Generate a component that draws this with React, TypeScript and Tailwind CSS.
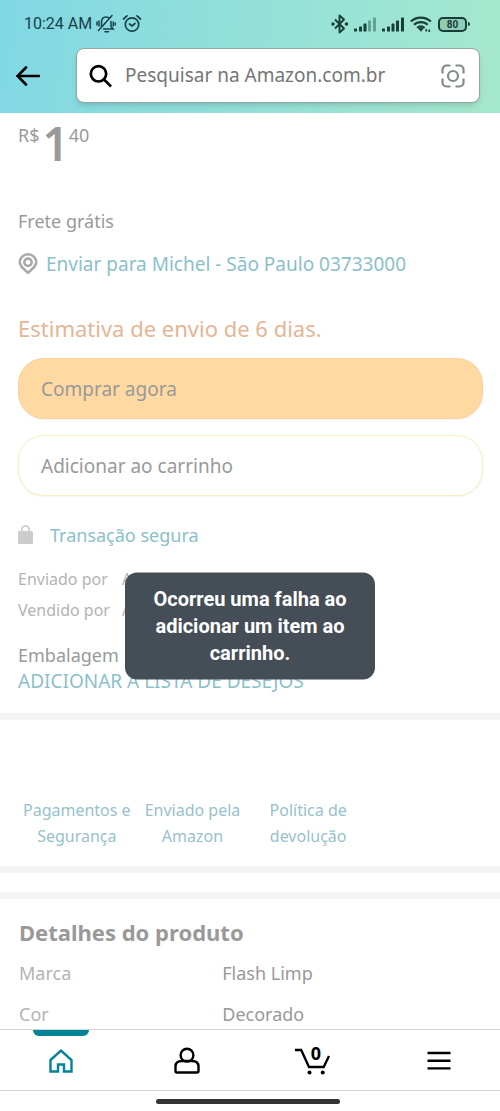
import type { ReactNode } from "react";

function StatusBar() {
  return (
    <div className="flex h-12 items-center justify-between pr-[30px] pl-6 font-[Roboto,sans-serif] text-[#17404a]">
      <div className="flex items-center gap-1">
        <span className="text-base leading-6">10:24 AM</span>
        <svg className="h-5 w-5" viewBox="0 0 20 20" fill="none" stroke="currentColor" strokeWidth="1.500" strokeLinecap="round">
          <path d="M5.500 12V8.500C5.500 5 7.200 3 10 3c1.500 0 2.700.5 3.600 1.400M15 7.500v5l2.200 2.500H7.500M2.500 16.500 16 1.500M9 17.700h3.500M1 8v3M3 7v5M17.300 8v4M19.300 9v2" />
        </svg>
        <svg className="ml-0.5 h-5 w-5" viewBox="0 0 20 20" fill="none" stroke="currentColor" strokeWidth="1.700" strokeLinecap="round">
          <circle cx="10" cy="10.500" r="6.700" />
          <path d="M1.500 5 5 1.800M18.500 5 15 1.800M7.500 10l2.500 2 3-2.500" />
        </svg>
      </div>
      <div className="flex items-center gap-1 text-[#173f38]">
        <svg className="h-5 w-5" viewBox="0 0 20 20" fill="none" stroke="currentColor" strokeWidth="1.900" strokeLinejoin="round">
          <path d="m5 5.500 9 9-4.500 4V1.500l4.500 4-9 9" />
          <circle cx="3" cy="10" r=".8" fill="currentColor" />
          <circle cx="16.500" cy="10" r=".8" fill="currentColor" />
        </svg>
        <SignalBars weak />
        <SignalBars />
        <svg className="h-5 w-6" viewBox="0 0 24 20" fill="none" stroke="currentColor" strokeWidth="2.300">
          <path d="M.8 7.500c5.500-5.300 14.500-5.300 20 0M4 10.800c3.800-3.700 9.900-3.700 13.700 0M7.200 14c2-2 5.200-2 7.400 0" />
          <path d="m8.200 14.500 2.700 3.300 2.700-3.300c-1.500-1.200-3.900-1.200-5.400 0Z" fill="currentColor" stroke="none" />
          <path d="M16.300 15v2.500M19.300 15.500V18" strokeWidth="1.600" />
        </svg>
        <div className="flex items-center gap-px">
          <span className="flex h-[15px] w-[29px] items-center justify-center rounded-[5px] border-2 border-current bg-[#8fcdb5] pt-px text-[10px] leading-[10px] font-bold">80</span>
          <span className="h-1 w-0.5 rounded-r bg-current" />
        </div>
      </div>
    </div>
  );
}

function SignalBars({ weak = false }: { weak?: boolean }) {
  return (
    <svg className="h-5 w-6" viewBox="0 0 24 20" fill="currentColor">
      <rect x="0" y="14.500" width="3" height="3" rx=".6" />
      <rect x="5" y="12.500" width="3" height="5" rx=".6" />
      <rect x="9.500" y="9.500" width="3" height="8" rx=".6" />
      <rect x="14" y="6.500" width="3" height="11" rx=".6" opacity={weak ? 0.4 : 1} />
      <rect x="19" y="3.500" width="3" height="14" rx=".6" opacity={weak ? 0.4 : 1} />
    </svg>
  );
}

function SearchHeader() {
  return (
    <div className="flex pr-5 pl-4 pb-2.5">
      <button type="button" aria-label="Voltar" className="mr-9 flex h-[55px] w-6 items-center">
        <svg className="h-6 w-6" viewBox="0 0 24 24" fill="none" stroke="#000" strokeWidth="2.600" strokeLinecap="round">
          <path d="M1.500 12H23M10 3.500 1.500 12l8.500 8.500" />
        </svg>
      </button>
      <label className="flex h-[55px] min-w-0 flex-1 items-center rounded-lg border border-[#93a5a5] bg-white pr-3.5 pl-3 shadow-md">
        <svg className="h-6 w-6 shrink-0" viewBox="0 0 24 24" fill="none" stroke="#000" strokeWidth="2.700">
          <circle cx="9.500" cy="9.800" r="7.700" />
          <path d="m15 15.500 7 7" />
        </svg>
        <input
          type="search"
          aria-label="Pesquisar"
          placeholder="Pesquisar na Amazon.com.br"
          className="ml-3 min-w-0 flex-1 bg-transparent text-[19px] outline-none placeholder:text-[#757575]"
        />
        <svg className="h-6 w-6 shrink-0" viewBox="0 0 24 24" fill="none" stroke="#848a8b" strokeWidth="2.200">
          <path d="M1.500 9.500V5.500a4 4 0 0 1 4-4h4M14.500 1.500h4a4 4 0 0 1 4 4v4M22.500 14.500v4a4 4 0 0 1-4 4h-4M9.500 22.500h-4a4 4 0 0 1-4-4v-4" />
          <circle cx="12" cy="12" r="5" />
        </svg>
      </label>
    </div>
  );
}

function Offer() {
  return (
    <section className="pr-[17px] pb-[19px] pl-[18px] text-lg leading-6 text-[#999]">
      <p className="flex h-[96px] items-start pt-2.5">
        <span>R$</span>
        <span className="pl-[3px] text-[46px] leading-10 font-semibold">1</span>
        <span>40</span>
      </p>
      <p>Frete grátis</p>
      <a href="#endereco" className="mt-[19px] flex items-center text-[19px] text-[#8bbfca]">
        <svg className="mr-2 h-[22px] w-5" viewBox="0 0 20 22" fill="none" stroke="#aaa" strokeWidth="2.600">
          <path d="M10 19.800C6 16 1.800 14 1.800 9.300a8.200 8 0 0 1 16.400 0c0 4.700-4.200 6.700-8.200 10.500Z" strokeLinejoin="round" />
          <circle cx="10" cy="9.300" r="3.700" />
        </svg>
        Enviar para Michel - São Paulo 03733000
      </a>
      <p className="mt-[38px] text-[22px] leading-7 text-[#e5b595]">Estimativa de envio de 6 dias.</p>
      <div className="mt-4 flex flex-col gap-4 pb-[27px] text-[19px]">
        <button type="button" className="h-[61px] rounded-[26px] border border-[#fbd09a] bg-[#fed9a2] px-[22px] text-left shadow-xs">
          Comprar agora
        </button>
        <button type="button" className="h-[61px] rounded-[26px] border border-[#f7efbd] bg-white px-[22px] text-left shadow-xs">
          Adicionar ao carrinho
        </button>
      </div>
      <a href="#seguranca" className="flex items-center text-[#8bbfca]">
        <svg className="mr-[17px] h-5 w-[15px]" viewBox="0 0 15 20" fill="#ccc">
          <path d="M0 7.500Q0 6 1.500 6H3V4.500a4.500 4.500 0 0 1 9 0V6h1.500Q15 6 15 7.500v10q0 1.500-1.500 1.500h-12Q0 19 0 17.500ZM4.700 6h5.600V4.500a2.800 2.800 0 0 0-5.600 0Z" fillRule="evenodd" />
        </svg>
        Transação segura
      </a>
      <dl className="mt-[17px] grid grid-cols-[auto_1fr] gap-x-3 text-base leading-[31px] text-[#b3b3b3]">
        <dt>Enviado por</dt>
        <dd>A</dd>
        <dt>Vendido por</dt>
        <dd>A</dd>
      </dl>
      <p className="mt-4 leading-[26px]">Embalagem</p>
      <a href="#lista" className="block text-[19px] leading-[26px] text-[#8bbfca]">ADICIONAR À LISTA DE DESEJOS</a>
    </section>
  );
}

function Divider() {
  return <div className="h-[7px] bg-[#f3f5f5]" />;
}

function Policies() {
  return (
    <section className="grid max-w-[366px] grid-cols-3 pt-[77px] pb-[17px] pl-[19px] text-center text-base leading-[26px] text-[#97c1cb]">
      <a href="#pagamentos">Pagamentos e<br />Segurança</a>
      <a href="#envio">Enviado pela<br />Amazon</a>
      <a href="#devolucao">Política de<br />devolução</a>
    </section>
  );
}

function Details() {
  return (
    <section className="px-[19px] pt-[19px] text-[#999]">
      <h2 className="text-[22px] leading-7 font-bold">Detalhes do produto</h2>
      <table className="mt-[7px] w-full text-left text-lg leading-[41px]">
        <tbody>
          <tr>
            <th scope="row" className="w-[44%] p-0 font-normal text-[#b3b3b3]">Marca</th>
            <td className="p-0">Flash Limp</td>
          </tr>
          <tr>
            <th scope="row" className="p-0 font-normal text-[#b3b3b3]">Cor</th>
            <td className="p-0">Decorado</td>
          </tr>
        </tbody>
      </table>
    </section>
  );
}

function NavItem({ label, active = false, children }: { label: string; active?: boolean; children: ReactNode }) {
  return (
    <a href={"#" + label.toLowerCase()} aria-label={label} className="flex flex-1 flex-col items-center">
      <span className={active ? "h-1.5 w-14 rounded-b-md bg-[#048296]" : "h-1.5 w-14"} />
      <span className="flex flex-1 items-center pb-1">{children}</span>
    </a>
  );
}

function BottomNav() {
  return (
    <footer className="shrink-0 overflow-hidden bg-white">
      <nav className="-mx-0.5 flex h-[62px] border-y border-[#cfd8d8]">
        <NavItem label="Início" active>
          <svg className="h-7 w-7" viewBox="0 0 28 28" fill="none" stroke="#048296" strokeWidth="2.400">
            <path d="M3.500 13 14 3.500 24.500 13v11.500H17v-7h-6v7H3.500Z" />
          </svg>
        </NavItem>
        <NavItem label="Conta">
          <svg className="h-7 w-7" viewBox="0 0 28 28" fill="none" stroke="#000" strokeWidth="2.400">
            <circle cx="14" cy="8.200" r="6.400" />
            <path d="M9 14h10c4.500 0 6.500 2 6.500 5.500v4.500q0 1.500-1.500 1.500H4q-1.500 0-1.500-1.500v-4.500C2.500 16 4.500 14 9 14Z" />
          </svg>
        </NavItem>
        <NavItem label="Carrinho">
          <span className="relative block">
            <svg className="h-8 w-9" viewBox="0 0 36 32" fill="none" stroke="#000" strokeWidth="2.300">
              <path d="M0 5h6.200L14 22h14.700L34 11" />
              <circle cx="14.500" cy="27.500" r="2" fill="#000" stroke="none" />
              <circle cx="27.700" cy="27.500" r="2" fill="#000" stroke="none" />
            </svg>
            <span className="absolute top-0 right-2.5 text-lg leading-4 font-bold text-black">0</span>
          </span>
        </NavItem>
        <NavItem label="Menu">
          <svg className="h-6 w-6" viewBox="0 0 24 24" stroke="#000" strokeWidth="2.400">
            <path d="M.5 4h23M.5 11.700h23M.5 19.400h23" />
          </svg>
        </NavItem>
      </nav>
      <div className="flex h-5 items-center justify-center pr-1">
        <div className="h-[5px] w-[37%] rounded-full bg-[#353335]" />
      </div>
    </footer>
  );
}

export default function App() {
  return (
    <div className="flex h-screen flex-col bg-white font-['Noto_Sans',sans-serif]">
      <header className="shrink-0 bg-linear-100 from-[#80d8e4] to-[#a6e8cd]">
        <StatusBar />
        <SearchHeader />
      </header>
      <main className="relative min-h-0 flex-1 overflow-hidden">
        <Offer />
        <Divider />
        <Policies />
        <Divider />
        <div className="h-[19px]" />
        <Divider />
        <Details />
        <div role="alert" className="absolute inset-x-1/4 top-[56%] -translate-y-1/2 rounded-xl bg-[#454d57] px-6 py-[13px] text-center font-[Roboto,sans-serif] text-xl leading-[27px] font-bold text-white">
          Ocorreu uma falha ao adicionar um item ao carrinho.
        </div>
      </main>
      <BottomNav />
    </div>
  );
}
